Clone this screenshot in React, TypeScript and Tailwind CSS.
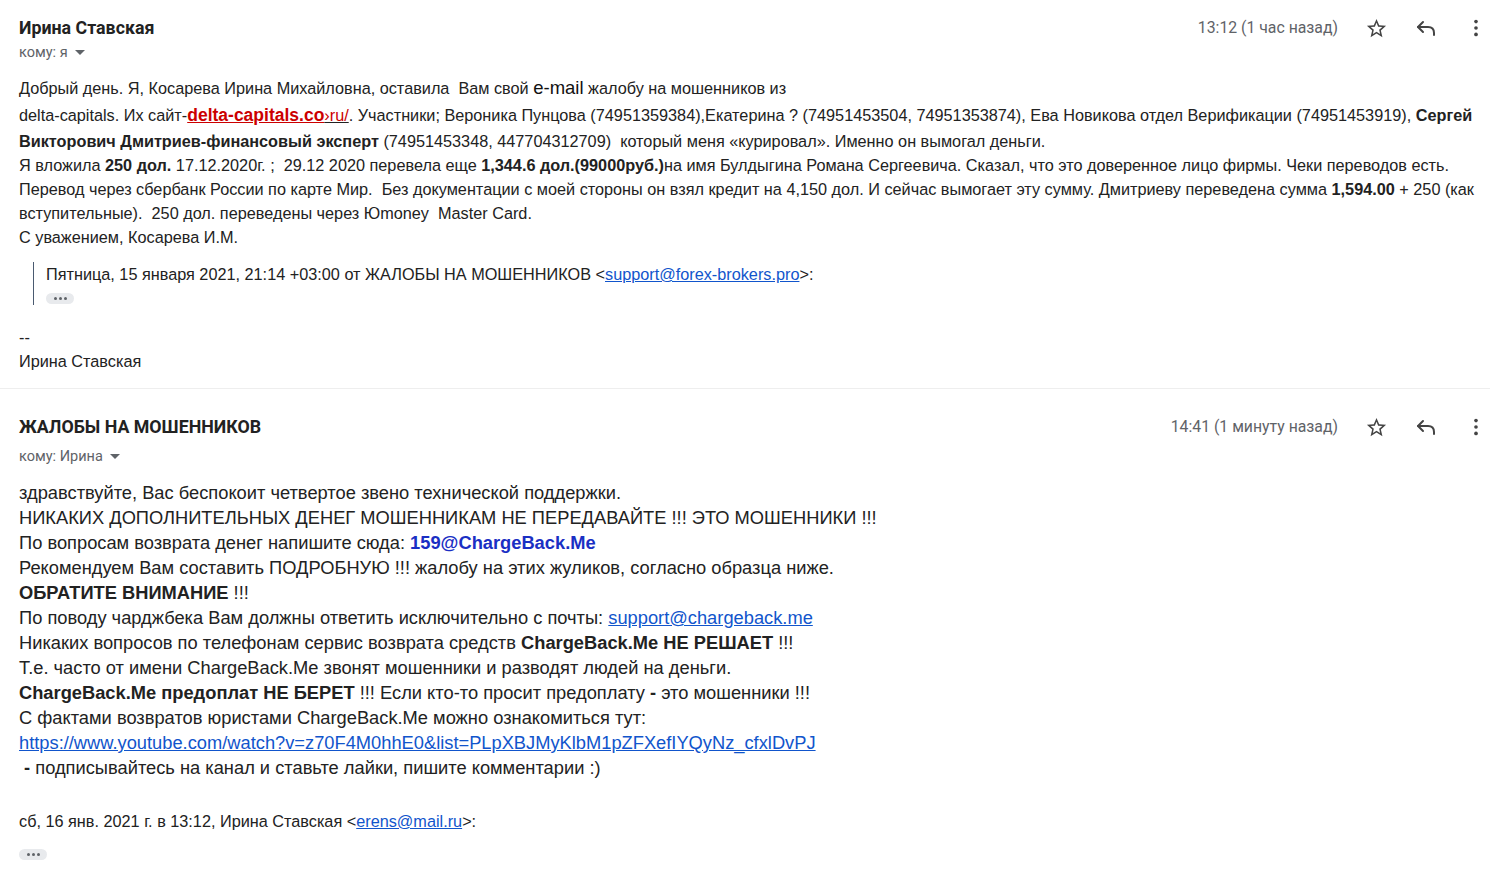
import React from 'react';

const body1 = "font-['Liberation_Sans',Arial,sans-serif] text-[16.25px] leading-[24px] text-[#222] whitespace-nowrap";
const body2 = "font-['Liberation_Sans',Arial,sans-serif] text-[18.3px] leading-[25px] text-[#222] whitespace-nowrap";
const head = "font-['Roboto','Liberation_Sans',sans-serif]";

function Star() {
  return (
    <svg width="23" height="23" viewBox="0 0 24 24" fill="#444">
      <path d="M22 9.24l-7.19-.62L12 2 9.19 8.63 2 9.24l5.46 4.73L5.82 21 12 17.27 18.18 21l-1.63-7.03L22 9.24zM12 15.4l-3.760 2.27 1-4.28-3.32-2.88 4.38-.38L12 6.1l1.71 4.04 4.38.38-3.32 2.88 1 4.28L12 15.4z" />
    </svg>
  );
}

function Reply() {
  return (
    <svg width="24" height="24" viewBox="0 0 24 24" fill="none" stroke="#444" strokeWidth="2" strokeLinecap="round" strokeLinejoin="round">
      <path d="M9 6L4 11l5 5" />
      <path d="M4 11h10c3.5 0 6 2 6 6v2" />
    </svg>
  );
}

function Dots() {
  return (
    <svg width="22" height="22" viewBox="0 0 24 24" fill="#444">
      <circle cx="12" cy="5" r="2" />
      <circle cx="12" cy="12" r="2" />
      <circle cx="12" cy="19" r="2" />
    </svg>
  );
}

function Header({ name, to, time, gap }: { name: string; to: string; time: string; gap: string }) {
  return (
    <div className="flex items-start justify-between">
      <div className={head}>
        <div className="text-[17.8px] font-bold leading-[24px] text-[#222]">{name}</div>
        <div className={`${gap} flex items-center gap-[7px] text-[14.5px] leading-[24px] text-[#5f6368]`}>
          <span>кому: {to}</span>
          <svg width="10" height="6" viewBox="0 0 10 6" fill="#5f6368"><path d="M0 0h10L5 5z" /></svg>
        </div>
      </div>
      <div className={`${head} flex items-center text-[15.8px] text-[#5f6368]`}>
        <span className="mr-[13px] leading-[24px]">{time}</span>
        <span className="flex h-[24px] w-[50px] items-center justify-center"><Star /></span>
        <span className="flex h-[24px] w-[50px] items-center justify-center"><Reply /></span>
        <span className="flex h-[24px] w-[50px] items-center justify-center"><Dots /></span>
      </div>
    </div>
  );
}

function More() {
  return (
    <span className="flex h-[11px] w-[28px] items-center justify-center gap-[2px] rounded-full bg-[#e8eaed]">
      <span className="h-[3px] w-[3px] rounded-full bg-[#5f6368]" />
      <span className="h-[3px] w-[3px] rounded-full bg-[#5f6368]" />
      <span className="h-[3px] w-[3px] rounded-full bg-[#5f6368]" />
    </span>
  );
}

export default function App() {
  return (
    <div className="h-[874px] w-[1506px] overflow-hidden bg-white">
      {/* first message */}
      <div className="pl-[19px] pr-[5px] pt-[16px]">
        <Header name="Ирина Ставская" to="я" time="13:12 (1 час назад)" gap="mt-[1px]" />

        <div className={`${body1} mt-[10px]`}>
          <div className="leading-[26px]">
            Добрый день. Я, Косарева Ирина Михайловна, оставила&nbsp; Вам свой{' '}
            <span className="text-[18.5px] text-[#111]">e-mail</span> жалобу на мошенников из
          </div>
          <div className="leading-[28px]">
            delta-capitals. Их сайт-
            <span className="text-[17.5px] font-bold text-[#cc0000] underline">delta-capitals.co</span>
            <span className="text-[#cc0000] underline decoration-[#222]">›ru/</span>. Участники; Вероника Пунцова (74951359384),Екатерина ? (74951453504, 74951353874), Ева Новикова отдел Верификации (74951453919), <b>Сергей</b>
          </div>
          <div>
            <b>Викторович Дмитриев-финансовый эксперт</b> (74951453348, 447704312709)&nbsp; который меня «курировал». Именно он вымогал деньги.
          </div>
          <div>
            Я вложила <b>250 дол.</b> 17.12.2020г. ;&nbsp; 29.12 2020 перевела еще <b>1,344.6 дол.(99000руб.)</b>на имя Булдыгина Романа Сергеевича. Сказал, что это доверенное лицо фирмы. Чеки переводов есть.
          </div>
          <div>
            Перевод через сбербанк России по карте Мир.&nbsp; Без документации с моей стороны он взял кредит на 4,150 дол. И сейчас вымогает эту сумму. Дмитриеву переведена сумма <b>1,594.00</b> + 250 (как
          </div>
          <div>вступительные).&nbsp; 250 дол. переведены через Юmoney&nbsp; Master Card.</div>
          <div>С уважением, Косарева И.М.</div>
        </div>

        <div className="ml-[14px] mt-[13px] border-l border-[#4a5a70] pb-[1px] pl-[12px]">
          <div className={`${body1} leading-[25px]`}>
            Пятница, 15 января 2021, 21:14 +03:00 от ЖАЛОБЫ НА МОШЕННИКОВ &lt;
            <span className="text-[#1155cc] underline">support@forex-brokers.pro</span>&gt;:
          </div>
          <div className="pt-[6px]"><More /></div>
        </div>

        <div className={`${body1} mt-[20px] leading-[23px]`}>
          <div>--</div>
          <div>Ирина Ставская</div>
        </div>
      </div>

      <div className="mr-[16px] mt-[15px] border-t border-[#eeeeee]" />

      {/* second message */}
      <div className="pl-[19px] pr-[5px] pt-[26px]">
        <Header name="ЖАЛОБЫ НА МОШЕННИКОВ" to="Ирина" time="14:41 (1 минуту назад)" gap="mt-[6px]" />

        <div className={`${body2} mt-[11px]`}>
          <div>здравствуйте, Вас беспокоит четвертое звено технической поддержки.</div>
          <div>НИКАКИХ ДОПОЛНИТЕЛЬНЫХ ДЕНЕГ МОШЕННИКАМ НЕ ПЕРЕДАВАЙТЕ !!! ЭТО МОШЕННИКИ !!!</div>
          <div>
            По вопросам возврата денег напишите сюда: <b className="text-[#1a2fc4]">159@ChargeBack.Me</b>
          </div>
          <div>Рекомендуем Вам составить ПОДРОБНУЮ !!! жалобу на этих жуликов, согласно образца ниже.</div>
          <div><b>ОБРАТИТЕ ВНИМАНИЕ</b> !!!</div>
          <div>
            По поводу чарджбека Вам должны ответить исключительно с почты:{' '}
            <span className="text-[#1155cc] underline">support@chargeback.me</span>
          </div>
          <div>
            Никаких вопросов по телефонам сервис возврата средств <b>ChargeBack.Me НЕ РЕШАЕТ</b> !!!
          </div>
          <div>Т.е. часто от имени ChargeBack.Me звонят мошенники и разводят людей на деньги.</div>
          <div>
            <b>ChargeBack.Me предоплат НЕ БЕРЕТ</b> !!! Если кто-то просит предоплату <b>-</b> это мошенники !!!
          </div>
          <div>С фактами возвратов юристами ChargeBack.Me можно ознакомиться тут:</div>
          <div>
            <span className="text-[#1155cc] underline">
              https://www.youtube.com/watch?v=z70F4M0hhE0&amp;list=PLpXBJMyKlbM1pZFXefIYQyNz_cfxlDvPJ
            </span>
          </div>
          <div>&nbsp;<b>-</b> подписывайтесь на канал и ставьте лайки, пишите комментарии :)</div>
        </div>

        <div className={`${body1} mt-[29px] leading-[25px]`}>
          сб, 16 янв. 2021 г. в 13:12, Ирина Ставская &lt;
          <span className="text-[#1155cc] underline">erens@mail.ru</span>&gt;:
        </div>
        <div className="mt-[15px]"><More /></div>
      </div>
    </div>
  );
}
